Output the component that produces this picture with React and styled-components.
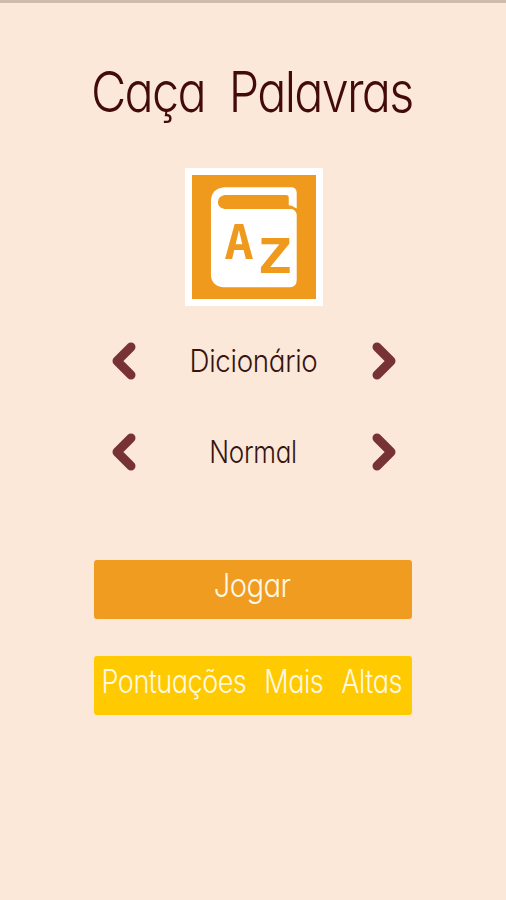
import React, { useState } from "react";
import styled, { createGlobalStyle } from "styled-components";

const categories = ["Dicionário", "Animais", "Frutas"];
const levels = ["Normal", "Difícil", "Fácil"];

export default function App() {
  const [category, setCategory] = useState(0);
  const [level, setLevel] = useState(0);

  return (
    <>
      <GlobalStyle />
      <Screen>
        <StatusLine />
        <Title>
          <Narrow $scale={0.865} $wordGap="14px">
            Caça Palavras
          </Narrow>
        </Title>
        <Cover>
          <BookIcon />
        </Cover>
        <Selectors>
          <Selector
            items={categories}
            index={category}
            onChange={setCategory}
            scale={0.895}
          />
          <Selector
            items={levels}
            index={level}
            onChange={setLevel}
            scale={0.84}
          />
        </Selectors>
        <Menu>
          <MenuButton $color="#f09c20">
            <Narrow $scale={0.91}>Jogar</Narrow>
          </MenuButton>
          <MenuButton $color="#ffca00">
            <Narrow $scale={0.845} $wordGap="13px">
              Pontuações Mais Altas
            </Narrow>
          </MenuButton>
        </Menu>
      </Screen>
    </>
  );
}

function Selector({ items, index, onChange, scale }) {
  const move = (step) => onChange((index + step + items.length) % items.length);

  return (
    <SelectorRow>
      <ArrowButton aria-label="Anterior" onClick={() => move(-1)}>
        <Chevron viewBox="0 0 24 38">
          <path d="M19 5 5 19 19 33" />
        </Chevron>
      </ArrowButton>
      <SelectorLabel>
        <Narrow $scale={scale}>{items[index]}</Narrow>
      </SelectorLabel>
      <ArrowButton aria-label="Próximo" onClick={() => move(1)}>
        <Chevron viewBox="0 0 24 38">
          <path d="M5 5 19 19 5 33" />
        </Chevron>
      </ArrowButton>
    </SelectorRow>
  );
}

function BookIcon() {
  return (
    <BookSvg viewBox="0 0 373 373">
      <path
        fill="#fff"
        d="M98 37H297Q315 37 315 54V316Q315 338 294 338H94Q57 334 57 298V78Q58 41 98 37Z"
      />
      <path
        fill="#ef9a1d"
        d="M98 60H283Q291 60 291 68V91Q303 92 309 98L316 101V119Q311 102 296 102H98Q78 98 78 81Q78 64 98 60Z"
      />
      <BookLetter x="97" y="252">
        A
      </BookLetter>
      <BookLetter x="198" y="295" textLength="102" lengthAdjust="spacingAndGlyphs">
        Z
      </BookLetter>
    </BookSvg>
  );
}

const GlobalStyle = createGlobalStyle`
  * {
    box-sizing: border-box;
  }
  body {
    margin: 0;
    background-color: #fbe8d9;
    font-family: Inter, "Open Sans", sans-serif;
    font-feature-settings: "cv11", "ss03";
  }
`;

const Screen = styled.main`
  display: flex;
  flex-direction: column;
  align-items: center;
  width: 506px;
  height: 900px;
  overflow: hidden;
  background-color: #fbe8d9;
`;

const StatusLine = styled.div`
  flex-shrink: 0;
  width: 100%;
  height: 3px;
  background-color: #cebbaa;
`;

const Narrow = styled.span`
  display: inline-block;
  white-space: nowrap;
  word-spacing: ${({ $wordGap }) => $wordGap || "normal"};
  transform: scaleX(${({ $scale }) => $scale});
`;

const Title = styled.h1`
  margin: 53px 2px 0 0;
  height: 72px;
  line-height: 72px;
  font-size: 56px;
  font-weight: 350;
  letter-spacing: -2px;
  color: #420b09;
`;

const Cover = styled.div`
  width: 138px;
  height: 138px;
  margin: 40px 0 0 1px;
  padding: 7px;
  background-color: #fff;
`;

const BookSvg = styled.svg`
  display: block;
  width: 124px;
  height: 124px;
  background-color: #ef9a1d;
`;

const BookLetter = styled.text`
  font-family: "DejaVu Sans Mono", monospace;
  font-size: 147px;
  font-weight: 700;
  fill: #ef9a1d;
`;

const Selectors = styled.div`
  display: flex;
  flex-direction: column;
  gap: 53px;
  margin: 36px 0 0 2px;
`;

const SelectorRow = styled.div`
  display: flex;
  align-items: center;
  justify-content: space-between;
  width: 285px;
  height: 38px;
`;

const ArrowButton = styled.button`
  padding: 0;
  border: none;
  background: none;
  cursor: pointer;
`;

const Chevron = styled.svg`
  display: block;
  width: 24px;
  height: 38px;
  fill: none;
  stroke: #763234;
  stroke-width: 9;
  stroke-linecap: round;
  stroke-linejoin: round;
`;

const SelectorLabel = styled.span`
  padding-right: 2px;
  font-size: 31px;
  font-weight: 350;
  line-height: 38px;
  letter-spacing: -0.35px;
  color: #351411;
`;

const Menu = styled.div`
  display: flex;
  flex-direction: column;
  gap: 37px;
  margin-top: 89px;
`;

const MenuButton = styled.button`
  display: flex;
  align-items: center;
  justify-content: center;
  width: 318px;
  height: 59px;
  padding: 0 2px 8px 0;
  border: none;
  border-radius: 3px;
  background-color: ${({ $color }) => $color};
  color: #fff8e6;
  font-family: inherit;
  font-feature-settings: inherit;
  font-size: 32px;
  font-weight: 350;
  letter-spacing: -0.6px;
  cursor: pointer;
`;
